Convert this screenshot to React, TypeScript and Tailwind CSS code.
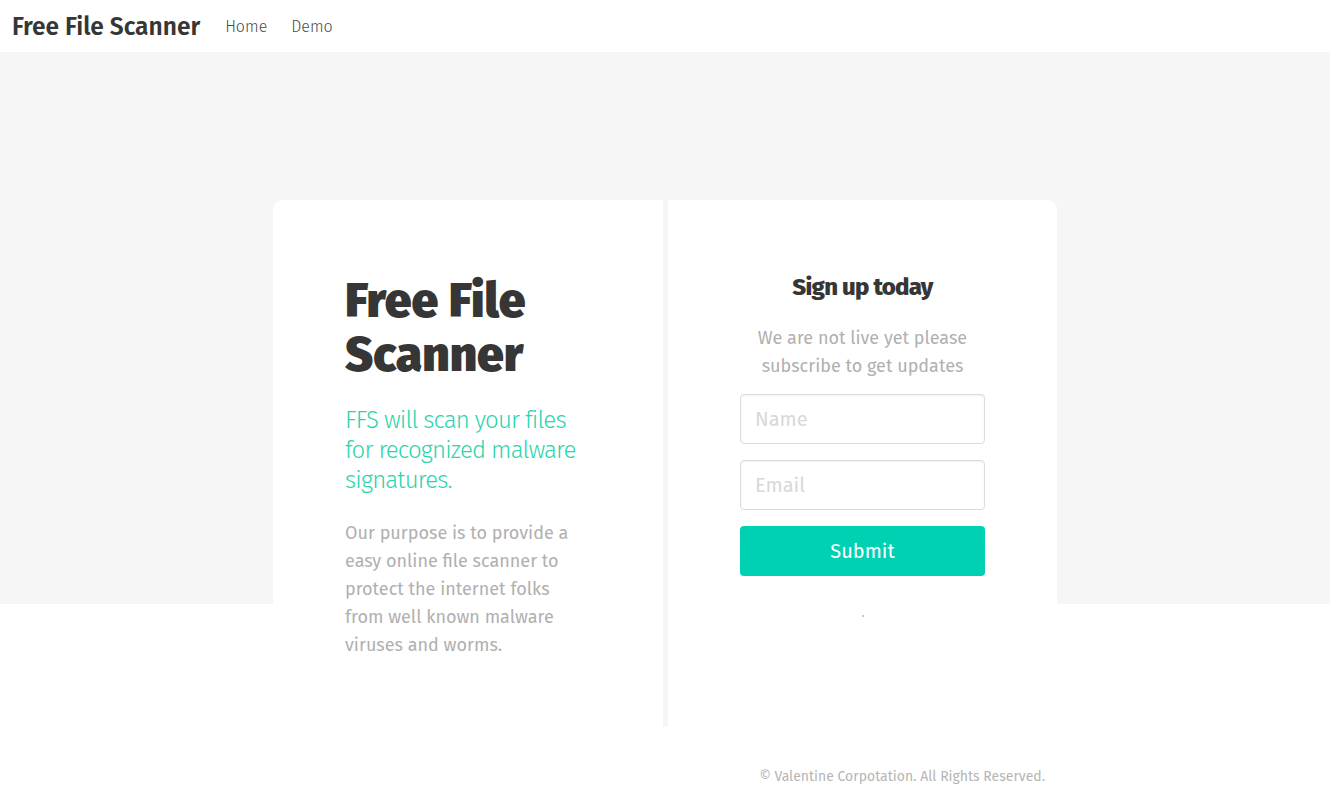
import React from "react";

const font = { fontFamily: '"Fira Sans", Lato, "Open Sans", sans-serif' };

export default function App() {
  return (
    <div className="min-h-[800px] bg-white text-[#4a4a4a]" style={font}>
      <nav className="h-[52px] bg-white flex items-center">
        <a className="pl-3 pr-[13px] text-[24.5px] leading-[30px] font-semibold text-[#363636] pt-[2px]">Free File Scanner</a>
        <a className="px-3 text-[16px] text-[#4a4a4a] font-light pt-[2px]">Home</a>
        <a className="px-3 text-[16px] text-[#4a4a4a] font-light pt-[2px]">Demo</a>
      </nav>
      <section className="h-[552px] bg-[#f6f6f6] pt-[148px]">
        <div className="flex justify-center">
          <div className="w-[390px] h-[527px] bg-white rounded-tl-[10px] pl-[72px] pt-[74px]">
            <h1 className="w-[240px] text-[48px] leading-[54px] font-black tracking-[0em] text-[#363636]">
              Free File Scanner
            </h1>
            <h2 className="mt-[23px] w-[240px] text-[24px] leading-[30px] font-light tracking-[-0.035em] text-[#2ad4ad]">
              FFS will scan your files for recognized malware signatures.
            </h2>
            <p className="mt-[24px] w-[240px] text-[18px] leading-[28px] text-[#b0b0b0]">
              Our purpose is to provide a easy online file scanner to protect the internet folks from well known malware viruses and worms.
            </p>
          </div>
          <div className="w-[5px] h-[527px] bg-[#f6f6f6]" />
          <div className="w-[389px] h-[527px] bg-white rounded-tr-[10px] flex flex-col items-center pt-[72px]">
            <h3 className="text-[24px] leading-[30px] font-extrabold tracking-[-0.03em] text-[#363636]">Sign up today</h3>
            <p className="mt-[22px] w-[245px] text-center text-[18px] leading-[28px] text-[#b0b0b0]">
              We are not live yet please subscribe to get updates
            </p>
            <div className="mt-[14px] w-[245px] flex flex-col gap-4">
              <input
                placeholder="Name"
                className="h-[50px] w-full rounded-[4px] border border-[#dbdbdb] px-[14px] text-[20px] placeholder:text-[#d8d8d8] shadow-[inset_0_1px_2px_rgba(10,10,10,0.06)] outline-none"
                style={font}
              />
              <input
                placeholder="Email"
                className="h-[50px] w-full rounded-[4px] border border-[#dbdbdb] px-[14px] text-[20px] placeholder:text-[#d8d8d8] shadow-[inset_0_1px_2px_rgba(10,10,10,0.06)] outline-none"
                style={font}
              />
              <button
                className="h-[50px] w-full rounded-[4px] bg-[#00d1b2] text-white text-[20px]"
                style={font}
              >
                Submit
              </button>
            </div>
            <div className="mt-[39px] w-[2px] h-[2px] rounded-full bg-[#bbbbbb]" />
          </div>
        </div>
      </section>
      <footer className="pt-[163px] flex justify-center">
        <div className="w-[784px] flex justify-end pr-[12px]">
          <p className="text-[14px] leading-[20px] text-[#b5b5b5]">© Valentine Corpotation. All Rights Reserved.</p>
        </div>
      </footer>
    </div>
  );
}
